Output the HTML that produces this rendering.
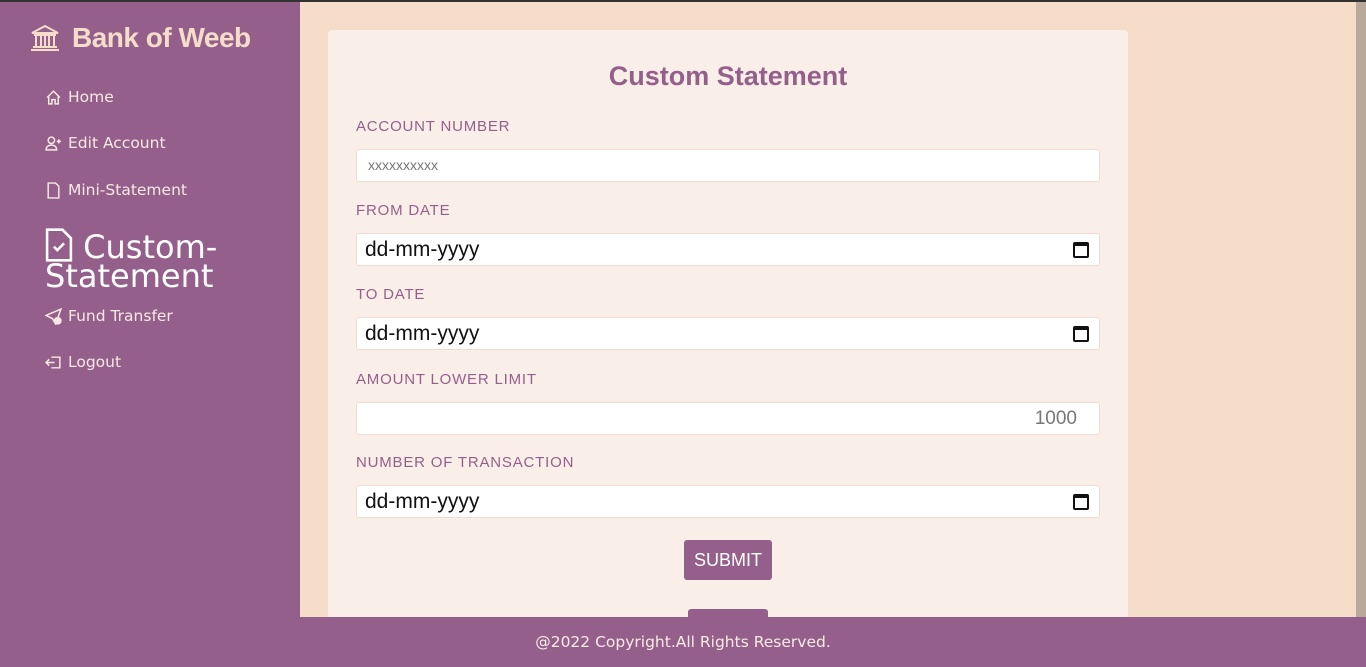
<!DOCTYPE html>
<html><head><style>
*{box-sizing:border-box;margin:0;padding:0}
body{width:1366px;height:667px;overflow:hidden;background:#f6ddca;font-family:"Liberation Sans",sans-serif;position:relative}
.top{position:absolute;left:0;top:0;width:1366px;height:2px;background:#333}
.side{position:absolute;left:0;top:2px;width:300px;height:665px;background:#955f8c}
.brand{position:absolute;left:30px;top:20px;color:#f6ddca;font-size:28px;font-weight:bold;letter-spacing:-0.5px;display:flex;align-items:center;gap:12px}
.nav{position:absolute;left:45px;color:#f7e9e2;font-size:15.5px;font-family:"DejaVu Sans",sans-serif;display:flex;align-items:center;gap:6px}
.nav svg{width:17px;height:17px}
.big{position:absolute;left:45px;top:228px;color:#fff;font-size:32px;line-height:28px;font-family:"DejaVu Sans",sans-serif}
.scroll{position:absolute;left:1356px;top:2px;width:10px;height:615px;background:#b9a99b}
.card{position:absolute;left:328px;top:30px;width:800px;height:600px;background:#f9eee8;border-radius:4px}
h1{position:absolute;left:0;width:800px;top:31px;text-align:center;color:#955f8c;font-size:27px;font-weight:bold}
.lbl{position:absolute;left:28px;color:#955f8c;font-size:15px;letter-spacing:0.8px}
.in{position:absolute;left:28px;width:744px;height:33px;background:#fff;border:1px solid #f0dccf;border-radius:3px;font-size:21px;color:#111;padding-left:8px;line-height:31px}
.cal{position:absolute;right:10px;top:8px;width:16px;height:16px;border:2px solid #111;border-top-width:4px;border-radius:2px}
.btn{position:absolute;left:356px;width:88px;height:40px;background:#955f8c;color:#fff;font-size:18px;text-align:center;line-height:40px;border-radius:3px}
.foot{position:absolute;left:0;top:617px;width:1366px;height:50px;background:#955f8c;color:#f7ebe4;font-size:15.5px;font-family:"DejaVu Sans",sans-serif;text-align:center;line-height:50px}
</style></head><body>
<div class="top"></div>
<div class="side">
<div class="brand"><svg width="30" height="28" viewBox="0 0 30 28" fill="none" stroke="#f6ddca" stroke-width="2"><path d="M2 9L15 2l13 7zM4 11h22M6 12v10M11 12v10M15 12v10M19 12v10M24 12v10M3 23h24M1 26h28"/></svg>Bank of Weeb</div>
</div>
<div class="nav" style="top:88px"><svg viewBox="0 0 16 16" fill="none" stroke="#f7e9e2" stroke-width="1.4"><path d="M2 8L8 2l6 6M3.5 7v7h3v-4h3v4h3V7"/></svg>Home</div>
<div class="nav" style="top:134px"><svg viewBox="0 0 16 16" fill="none" stroke="#f7e9e2" stroke-width="1.4"><circle cx="6" cy="5" r="3"/><path d="M1 14c0-3 2-4.5 5-4.5s5 1.5 5 4.5zM13 4v4M11 6h4"/></svg>Edit Account</div>
<div class="nav" style="top:181px"><svg viewBox="0 0 16 16" fill="none" stroke="#f7e9e2" stroke-width="1.4"><path d="M3 1h7l3 3v11H3z"/></svg>Mini-Statement</div>
<div class="big"><svg width="28" height="34" viewBox="0 0 16 20" fill="none" stroke="#fff" stroke-width="1.5" style="vertical-align:-4px"><path d="M1 1h9l5 5v13H1z"/><path d="M5 11l2 2 4-4"/></svg> Custom-<br>Statement</div>
<div class="nav" style="top:307px"><svg viewBox="0 0 16 16" fill="none" stroke="#f7e9e2" stroke-width="1.4"><path d="M1 7l14-6-5 14-3-5z"/><circle cx="12" cy="12" r="3" fill="#f7e9e2"/></svg>Fund Transfer</div>
<div class="nav" style="top:353px"><svg viewBox="0 0 16 16" fill="none" stroke="#f7e9e2" stroke-width="1.4"><path d="M6 3h8v10H6M9 8H1M4 5L1 8l3 3"/></svg>Logout</div>
<div class="scroll"></div>
<div class="card">
<h1>Custom Statement</h1>
<div class="lbl" style="top:88px">ACCOUNT NUMBER</div>
<div class="in" style="top:119px;font-size:14px;color:#777;padding-left:11px">xxxxxxxxxx</div>
<div class="lbl" style="top:172px">FROM DATE</div>
<div class="in" style="top:203px">dd-mm-yyyy<div class="cal"></div></div>
<div class="lbl" style="top:256px">TO DATE</div>
<div class="in" style="top:287px">dd-mm-yyyy<div class="cal"></div></div>
<div class="lbl" style="top:341px">AMOUNT LOWER LIMIT</div>
<div class="in" style="top:372px;text-align:right;padding-right:22px;color:#777;font-size:19px">1000</div>
<div class="lbl" style="top:424px">NUMBER OF TRANSACTION</div>
<div class="in" style="top:455px">dd-mm-yyyy<div class="cal"></div></div>
<div class="btn" style="top:510px">SUBMIT</div>
<div class="btn" style="top:579px;left:360px;width:80px"></div>
</div>
<div class="foot">@2022 Copyright.All Rights Reserved.</div>
</body></html>
